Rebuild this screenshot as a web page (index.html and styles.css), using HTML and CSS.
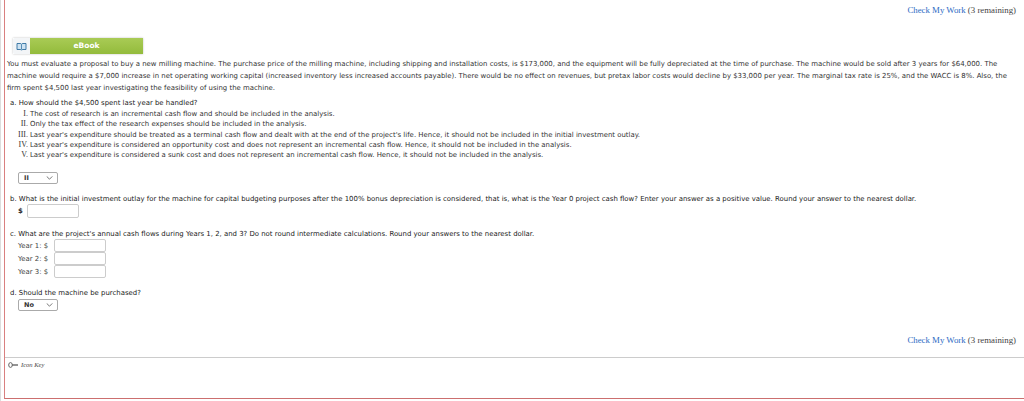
FILE: index.html
```html
<!DOCTYPE html>
<html lang="en">
<head>
    <meta charset="UTF-8">
    <title>Check My Work</title>
    <link rel="stylesheet" href="styles.css">
</head>
<body>
    <div class="frame">
        <div class="check-row">
            <a class="check-link">Check My Work</a> (3 remaining)
        </div>

        <!-- eBook bar -->
        <div class="ebook">
            <div class="ebook-icon">
                <svg viewBox="0 0 14 12" width="11" height="9">
                    <path d="M1 2h5l1 1 1-1h5v8H8l-1 1-1-1H1z" fill="#cfe3f2" stroke="#2f6f9f" stroke-width="1.2"/>
                    <path d="M7 3v7" stroke="#2f6f9f"/>
                </svg>
            </div>
            <div class="ebook-label">eBook</div>
        </div>

        <p class="intro">You must evaluate a proposal to buy a new milling machine. The purchase price of the milling machine, including shipping and installation costs, is $173,000, and the equipment will be fully depreciated at the time of purchase. The machine would be sold after 3 years for $64,000. The machine would require a $7,000 increase in net operating working capital (increased inventory less increased accounts payable). There would be no effect on revenues, but pretax labor costs would decline by $33,000 per year. The marginal tax rate is 25%, and the WACC is 8%. Also, the firm spent $4,500 last year investigating the feasibility of using the machine.</p>

        <div class="question q-a">
            <div class="q-text">a. How should the $4,500 spent last year be handled?</div>
            <ol class="options">
                <li><span class="num">I.</span>The cost of research is an incremental cash flow and should be included in the analysis.</li>
                <li><span class="num">II.</span>Only the tax effect of the research expenses should be included in the analysis.</li>
                <li><span class="num">III.</span>Last year's expenditure should be treated as a terminal cash flow and dealt with at the end of the project's life. Hence, it should not be included in the initial investment outlay.</li>
                <li><span class="num">IV.</span>Last year's expenditure is considered an opportunity cost and does not represent an incremental cash flow. Hence, it should not be included in the analysis.</li>
                <li><span class="num">V.</span>Last year's expenditure is considered a sunk cost and does not represent an incremental cash flow. Hence, it should not be included in the analysis.</li>
            </ol>
            <div class="select-box"><span>II</span><svg viewBox="0 0 8 5" width="7" height="4"><path d="M0.5 0.5L4 4l3.5-3.5" fill="none" stroke="#555"/></svg></div>
        </div>

        <div class="question q-b">
            <div class="q-text">b. What is the initial investment outlay for the machine for capital budgeting purposes after the 100% bonus depreciation is considered, that is, what is the Year 0 project cash flow? Enter your answer as a positive value. Round your answer to the nearest dollar.</div>
            <div class="dollar-row"><b class="dollar">$</b><div class="input-box"></div></div>
        </div>

        <div class="question q-c">
            <div class="q-text">c. What are the project's annual cash flows during Years 1, 2, and 3? Do not round intermediate calculations. Round your answers to the nearest dollar.</div>
            <div class="year-rows">
                <div class="year-row"><span class="year-label">Year 1: $</span><div class="input-box"></div></div>
                <div class="year-row"><span class="year-label">Year 2: $</span><div class="input-box"></div></div>
                <div class="year-row"><span class="year-label">Year 3: $</span><div class="input-box"></div></div>
            </div>
        </div>

        <div class="question q-d">
            <div class="q-text">d. Should the machine be purchased?</div>
            <div class="select-box"><span>No</span><svg viewBox="0 0 8 5" width="7" height="4"><path d="M0.5 0.5L4 4l3.5-3.5" fill="none" stroke="#555"/></svg></div>
        </div>

        <div class="check-row check-bottom">
            <a class="check-link">Check My Work</a> (3 remaining)
        </div>

        <!-- Icon key -->
        <div class="icon-key">
            <svg viewBox="0 0 10 6" width="10" height="6"><ellipse cx="2.5" cy="3" rx="1.8" ry="2.4" fill="none" stroke="#666"/><path d="M4 3h6" stroke="#666" stroke-width="1.4"/></svg>
            <i>Icon Key</i>
        </div>
    </div>
</body>
</html>
```

FILE: styles.css
```css
* {
    margin: 0;
    padding: 0;
    box-sizing: border-box;
}

html, body {
    height: 401px;
    overflow: hidden;
    background: #fff;
}

body {
    padding-left: 1px;
    font-family: 'DejaVu Sans', sans-serif;
    font-size: 6.93px;
    line-height: 12px;
    color: #333;
    border-left: 1px solid #ddd;
}

.frame {
    height: 399px;
    margin-left: 2px;
    border-left: 1px solid #d98080;
    border-bottom: 1px solid #cc6f6f;
}

/* Check my work */
.check-row {
    height: 14px;
    padding: 4px 8px 0 0;
    text-align: right;
    font-family: 'Liberation Serif', serif;
    font-size: 8.8px;
    line-height: 12px;
    color: #444;
}

.check-link {
    color: #2d6bc4;
}

.check-bottom {
    height: 12px;
    margin-top: 23px;
    padding-top: 0;
}

/* eBook */
.ebook {
    display: flex;
    width: 130px;
    height: 16px;
    margin: 24px 0 0 8px;
    box-shadow: 0 0 2px rgba(0, 0, 0, 0.25);
}

.ebook-icon {
    display: flex;
    align-items: center;
    justify-content: center;
    width: 17px;
    background: #f3f5f7;
    border-radius: 2px 0 0 2px;
}

.ebook-label {
    flex: 1;
    text-align: center;
    font-size: 7.5px;
    line-height: 16px;
    font-weight: bold;
    color: #fff;
    background: linear-gradient(#a9cb55, #93bb3c);
}

.intro {
    width: 1006px;
    margin: 4px 0 0 2px;
}

.question {
    margin-left: 5px;
}

.q-text {
    color: #222;
}

.q-a {
    margin-top: 3px;
}

.options {
    list-style: none;
}

.options li {
    display: flex;
    height: 10.3px;
    line-height: 10.3px;
}

.num {
    width: 20px;
    padding-right: 2px;
    text-align: right;
    font-family: 'Liberation Serif', serif;
    font-size: 8px;
}

.select-box {
    display: flex;
    align-items: center;
    justify-content: space-between;
    width: 40px;
    height: 12px;
    margin: 12px 0 0 8px;
    padding: 0 4px 0 5px;
    background: #fff;
    border: 1px solid #aaa;
    border-radius: 2px;
    font-size: 6.5px;
    font-weight: bold;
    line-height: 10px;
}

.q-b {
    margin-top: 9px;
}

.dollar-row {
    display: flex;
    align-items: center;
    margin: -1px 0 0 8px;
}

.dollar {
    width: 9px;
}

.input-box {
    width: 52px;
    height: 13px;
    background: #fff;
    border: 1px solid #ccc;
    border-radius: 2px;
}

.dollar-row .input-box {
    height: 14px;
}

.q-c {
    margin-top: 10px;
}

.year-rows {
    margin-top: -1px;
}

.year-row {
    display: flex;
    align-items: center;
    height: 13px;
}

.year-label {
    width: 36px;
    margin-left: 8px;
    color: #444;
}

.q-d {
    margin-top: 9px;
}

.q-d .select-box {
    margin-top: 0;
}

/* Bottom panel */
.icon-key {
    display: flex;
    align-items: center;
    gap: 3px;
    margin-top: 11px;
    padding: 1px 0 0 3px;
    border-top: 1px solid #ccc;
    font-family: 'Liberation Serif', serif;
    font-size: 6.5px;
    color: #444;
}
```
